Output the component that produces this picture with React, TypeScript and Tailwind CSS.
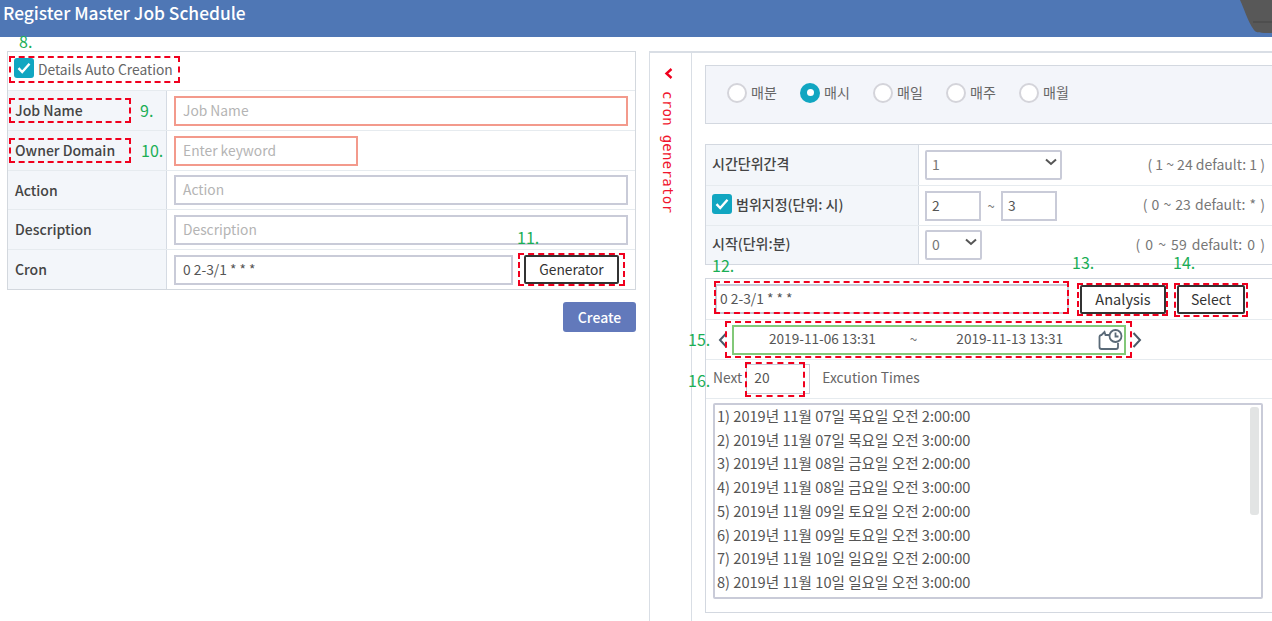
import React from "react";

const inputBase = "h-[30px] border-2 border-[#c9cbd8] bg-white text-[13.8px] leading-[24px] text-[#555]";
const ph = "text-[#b4b4b4]";

function Label({ children, className = "" }: { children: React.ReactNode; className?: string }) {
  return <div className={"absolute text-[16px] leading-[18px] text-[#1aae55] " + className}>{children}</div>;
}
function Dash({ className }: { className: string }) {
  return <div className={"absolute border-2 border-dashed border-[#f0001e] pointer-events-none " + className} />;
}
function Check({ className = "" }: { className?: string }) {
  return (
    <span className={"flex items-center justify-center rounded-[3px] bg-[#11a6c1] w-[20px] h-[20px] shrink-0 " + className}>
      <svg width="14" height="12" viewBox="0 0 14 12" fill="none">
        <path d="M1.5 6.2 L5.2 10 L12.5 1.8" stroke="#fff" strokeWidth="2.4" />
      </svg>
    </span>
  );
}
function Row({ label, children, last = false, h = "h-[40px]" }: { label: React.ReactNode; children: React.ReactNode; last?: boolean; h?: string }) {
  return (
    <div className={"flex " + h + (last ? "" : " border-b border-[#e6ebef]")}>
      <div className="w-[159px] shrink-0 bg-[#f3f6fa] border-r border-[#d5dbe3] pl-[7px] flex items-center text-[14px] font-medium text-[#444]">{label}</div>
      <div className="relative flex-1 flex items-center pl-[7px] pr-[7px]">{children}</div>
    </div>
  );
}
function Radio({ label, on = false }: { label: string; on?: boolean }) {
  return (
    <div className="w-[73px] flex items-center gap-[4px]">
      {on ? (
        <span className="w-[20px] h-[20px] rounded-full bg-[#11a6c1] flex items-center justify-center">
          <span className="w-[7px] h-[7px] rounded-full bg-white" />
        </span>
      ) : (
        <span className="w-[20px] h-[20px] rounded-full bg-white border-2 border-[#d4d4da]" />
      )}
      <span className="text-[14px] text-[#666]">{label}</span>
    </div>
  );
}
function Select({ value, className }: { value: string; className: string }) {
  return (
    <div className={"relative h-[30px] border-2 border-[#c9cbd8] rounded-[2px] bg-white pl-[5px] text-[14px] leading-[25px] text-[#777] " + className}>
      {value}
      <svg className="absolute right-[3px] top-[6px]" width="12" height="8" viewBox="0 0 12 8" fill="none">
        <path d="M1 1.5 L6 6 L11 1.5" stroke="#555" strokeWidth="2" />
      </svg>
    </div>
  );
}
function CtrlRow({ label, hint, hintClass = "", children, last = false, h }: { label: React.ReactNode; hint: string; hintClass?: string; children: React.ReactNode; last?: boolean; h: string }) {
  return (
    <div className={"flex " + h + (last ? "" : " border-b border-[#e6ebef]")}>
      <div className="w-[213px] shrink-0 bg-[#f3f6fa] border-r border-[#d5dbe3] pl-[6px] pb-[3px] flex items-center text-[14px] font-medium text-[#444]">{label}</div>
      <div className="flex-1 flex items-center pl-[6px] pr-[7px] justify-between">
        <div className="flex items-center">{children}</div>
        <span className={"text-[14px] leading-[16px] text-[#777] mb-[3px] " + hintClass}>{hint}</span>
      </div>
    </div>
  );
}
const times = [
  "1) 2019년 11월 07일 목요일 오전 2:00:00",
  "2) 2019년 11월 07일 목요일 오전 3:00:00",
  "3) 2019년 11월 08일 금요일 오전 2:00:00",
  "4) 2019년 11월 08일 금요일 오전 3:00:00",
  "5) 2019년 11월 09일 토요일 오전 2:00:00",
  "6) 2019년 11월 09일 토요일 오전 3:00:00",
  "7) 2019년 11월 10일 일요일 오전 2:00:00",
  "8) 2019년 11월 10일 일요일 오전 3:00:00",
];

export default function App() {
  return (
    <div className="relative w-[1272px] h-[621px] overflow-hidden bg-white font-['Noto_Sans_CJK_KR','Noto_Sans',sans-serif]">
      <header className="relative h-[37px] bg-[#4f77b5] overflow-hidden pl-[3px] text-[17.35px] leading-[25px] font-medium text-white">
        Register Master Job Schedule
        <svg className="absolute right-0 top-0" width="32" height="34" viewBox="0 0 32 34">
          <path d="M0 0 C4 8 7 20 14 30 C16 33 20 33 32 33 L32 0 Z" fill="#585858" />
          <path d="M13 22 L32 22" stroke="#444" strokeWidth="1" />
        </svg>
      </header>

      <Label className="left-[19px] top-[32px]">8.</Label>

      <main className="flex pt-[14px] h-[584px]">
        <div className="ml-[7px] w-[629px] shrink-0">
          <div className="border border-[#d3d8de]">
            <div className="relative h-[39px] border-b border-[#e6ebef] flex items-center pl-[6px] pb-[4px] gap-[4px] text-[13.8px] text-[#666]">
              <Check className="-mt-[2px]" />
              <span>Details Auto Creation</span>
              <Dash className="left-[1px] top-[4px] w-[171px] h-[27px]" />
            </div>
            <Row label="Job Name">
              <div className={inputBase + " pl-[7px] w-full border-[#f39a8c] " + ph}>Job Name</div>
              <Dash className="left-[-158px] top-[7px] w-[122px] h-[25px]" />
              <Label className="left-[-27px] top-[10px]">9.</Label>
            </Row>
            <Row label="Owner Domain">
              <div className={inputBase + " pl-[7px] w-[184px] border-[#f39a8c] " + ph}>Enter keyword</div>
              <Dash className="left-[-158px] top-[7px] w-[122px] h-[25px]" />
              <Label className="left-[-26px] top-[10px]">10.</Label>
            </Row>
            <Row label="Action" h="h-[39px]">
              <div className={inputBase + " pl-[7px] w-full " + ph}>Action</div>
            </Row>
            <Row label="Description">
              <div className={inputBase + " pl-[7px] w-full " + ph}>Description</div>
            </Row>
            <Row label="Cron" last h="h-[39px]">
              <div className={inputBase + " pl-[7px] w-[339px]"}>0 2-3/1 * * *</div>
              <div className="relative ml-[11px]">
                <button className="block w-[95px] h-[29px] border-2 border-[#333] rounded-[2px] bg-white text-[13.8px] text-[#333]">Generator</button>
                <Dash className="left-[-6px] top-[-2px] w-[107px] h-[33px]" />
                <Label className="left-[-7px] top-[-27px]">11.</Label>
              </div>
            </Row>
          </div>
          <div className="flex justify-end mt-[12px]">
            <button className="w-[73px] h-[30px] rounded-[3px] bg-[#6279bb] text-[14px] font-medium text-white">Create</button>
          </div>
        </div>

        <div className="ml-[13px] w-[43px] shrink-0 border-x border-t-2 border-x-[#d9dee5] border-t-[#d9dee5] flex flex-col items-center pt-[15px]">
          <svg width="9" height="11" viewBox="0 0 9 11" fill="none" className="mr-[4px]">
            <path d="M7.5 1 L2.5 5.5 L7.5 10" stroke="#f0001e" strokeWidth="2.4" />
          </svg>
          <div className="mt-[12px] mr-[5px] [writing-mode:vertical-rl] font-['DejaVu_Sans_Mono',monospace] text-[14px] tracking-[0.3px] leading-[14px] text-[#f0152d]">cron generator</div>
        </div>

        <div className="flex-1 border-t-2 border-[#d9dee5] pl-[13px] pt-[12px]">
          <div className="h-[59px] bg-[#f3f5fa] border border-[#d3d8e0] border-r-0 flex items-center pl-[21px] pb-[4px]">
            <Radio label="매분" />
            <Radio label="매시" on />
            <Radio label="매일" />
            <Radio label="매주" />
            <Radio label="매월" />
          </div>

          <div className="mt-[20px] border border-[#d3d8e0] border-r-0 h-[121px]">
            <CtrlRow h="h-[41px]" label="시간단위간격" hint="( 1 ~ 24 default: 1 )">
              <Select value="1" className="w-[137px]" />
            </CtrlRow>
            <CtrlRow
              h="h-[40px]"
              label={<span className="flex items-center gap-[4px]"><Check /><span>범위지정(단위: 시)</span></span>}
              hint="( 0 ~ 23 default: * )"
              hintClass="[word-spacing:1px]"
            >
              <div className={inputBase + " w-[56px] pl-[5px]"}>2</div>
              <span className="w-[20px] text-center text-[13px] text-[#777]">~</span>
              <div className={inputBase + " w-[56px] pl-[5px]"}>3</div>
            </CtrlRow>
            <CtrlRow h="h-[38px]" label="시작(단위:분)" hint="( 0 ~ 59 default: 0 )" hintClass="[word-spacing:2px]" last>
              <Select value="0" className="w-[57px]" />
            </CtrlRow>
          </div>

          <div className="relative mt-[13px] border border-[#d3d8e0] border-r-0 h-[335px]">
            <Label className="left-[6px] top-[-23px]">12.</Label>
            <Label className="left-[366px] top-[-26px]">13.</Label>
            <Label className="left-[467px] top-[-26px]">14.</Label>

            <div className="flex items-center h-[41px] border-b border-[#e6ebef] pl-[9px]">
              <div className="relative">
                <div className={inputBase + " w-[354px] pl-[3px]"}>0 2-3/1 * * *</div>
                <Dash className="left-[-1px] top-[-3px] w-[355px] h-[33px]" />
              </div>
              <div className="relative ml-[11px]">
                <button className="block w-[86px] h-[29px] border-2 border-[#333] rounded-[2px] bg-white text-[14.6px] text-[#333]">Analysis</button>
                <Dash className="left-[-3px] top-[-2px] w-[91px] h-[33px]" />
              </div>
              <div className="relative ml-[11px]">
                <button className="block w-[68px] h-[29px] border-2 border-[#333] rounded-[2px] bg-white text-[14px] text-[#333]">Select</button>
                <Dash className="left-[-3px] top-[-2px] w-[74px] h-[34px]" />
              </div>
            </div>

            <div className="relative flex items-center h-[40px] border-b border-[#e6ebef] pl-[12px]">
              <Label className="left-[-18px] top-[10px]">15.</Label>
              <svg width="10" height="18" viewBox="0 0 10 18" fill="none"><path d="M8.5 2 L2 9 L8.5 16" stroke="#4a5a68" strokeWidth="2" /></svg>
              <div className="relative ml-[4px] w-[394px] h-[30px] border-2 border-[#82c878] flex items-center pb-[3px] text-[13.6px] text-[#555]">
                <span className="ml-[35px]">2019-11-06 13:31</span>
                <span className="ml-[34px] text-[#777]">~</span>
                <span className="ml-[39px]">2019-11-13 13:31</span>
                <svg className="absolute right-[1px] top-[1px]" width="25" height="23" viewBox="0 0 25 23" fill="none" stroke="#5a6a78" strokeWidth="1.8">
                  <path d="M12 7 H7.5 L6.5 4 L3.5 7 C2 7 1.5 8 1.5 9 V19 C1.5 20.5 2.5 21 3.5 21 H18 C19 21 20 20.5 20 19 V15" />
                  <circle cx="17.5" cy="8" r="6" />
                  <path d="M17.5 4.5 V8.5 H20.5" />
                </svg>
                <Dash className="left-[-9px] top-[-6px] w-[407px] h-[37px]" />
              </div>
              <svg className="ml-[6px]" width="10" height="18" viewBox="0 0 10 18" fill="none"><path d="M1.5 2 L8 9 L1.5 16" stroke="#4a5a68" strokeWidth="2" /></svg>
            </div>

            <div className="relative flex items-center h-[39px] border-b border-[#e6ebef] pl-[7px] text-[13.8px] text-[#666]">
              <Label className="left-[-18px] top-[11px]">16.</Label>
              <span className="mb-[3px]">Next</span>
              <div className="relative ml-[4px]">
                <div className="w-[64px] h-[30px] border border-[#c9cbd8] pl-[7px] leading-[25px] text-[#555]">20</div>
                <Dash className="left-[-1px] top-[-2px] w-[60px] h-[35px]" />
              </div>
              <span className="ml-[12px] mb-[3px]">Excution Times</span>
            </div>

            <div className="relative ml-[7px] mt-[4px] w-[550px] h-[196px] border-2 border-[#c9cbd8] rounded-[2px] overflow-hidden pl-[2px] text-[14.6px] leading-[23.7px] text-[#555]">
              <div className="-mt-[1px]">
                {times.map((t) => <div key={t}>{t}</div>)}
              </div>
              <div className="absolute right-[2px] top-[2px] w-[9px] h-[108px] rounded-[3px] bg-[#e2e4e4]" />
            </div>
          </div>
        </div>
      </main>
    </div>
  );
}
